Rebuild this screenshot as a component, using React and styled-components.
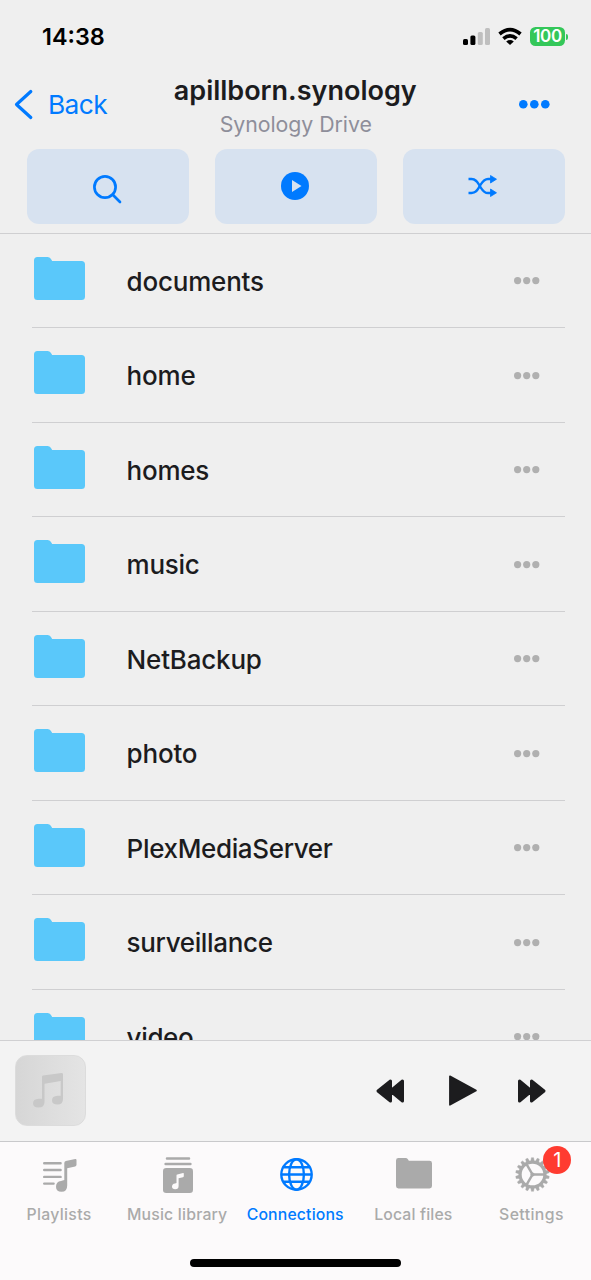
import React from "react";
import styled, { createGlobalStyle } from "styled-components";

const BLUE = "#007aff";
const INK = "#1c1c1e";
const GREY = "#aaaaaa";

const GlobalStyle = createGlobalStyle`
  * { box-sizing: border-box; }
  body { margin: 0; background: #efefef; font-family: Inter, "Liberation Sans", sans-serif; }
  svg { display: block; flex: none; overflow: visible; }
  button { border: 0; padding: 0; margin: 0; background: none; font: inherit; color: inherit; }
`;

const Screen = styled.div`
  width: 591px;
  height: 1280px;
  display: flex;
  flex-direction: column;
  overflow: hidden;
  background: #efefef;
  color: ${INK};
`;

const StatusBar = styled.div`
  height: 72px;
  padding: 1px 23px 0 42px;
  display: flex;
  justify-content: space-between;
  align-items: center;
  color: #000;
`;

const Clock = styled.span`
  font-size: 23.4px;
  line-height: 28px;
  font-weight: 600;
`;

const StatusIcons = styled.div`
  display: flex;
  align-items: center;
  gap: 8px;
`;

const Battery = styled.div`
  display: flex;
  align-items: center;
  gap: 1px;
`;

const BatteryBody = styled.span`
  width: 35px;
  height: 19px;
  border-radius: 5.5px;
  background: #34c759;
  color: #fff;
  font-size: 17px;
  line-height: 19px;
  font-weight: 600;
  letter-spacing: -0.3px;
  text-align: center;
`;

const BatteryTip = styled.span`
  width: 2px;
  height: 6px;
  border-radius: 0 2px 2px 0;
  background: #34c759;
`;

const Header = styled.header`
  height: 76px;
  padding: 0 40.5px 0 14px;
  display: grid;
  grid-template-columns: 110px 1fr 32px;
  align-items: start;
`;

const BackButton = styled.button`
  padding-top: 16px;
  display: flex;
  align-items: center;
  gap: 15px;
  color: ${BLUE};
  font-size: 26.3px;
  line-height: 32px;
  letter-spacing: -0.6px;
  white-space: nowrap;
`;

const BackLabel = styled.span`
  padding-top: 1px;
`;

const Titles = styled.div`
  padding: 2px 52px 0 0;
  display: flex;
  flex-direction: column;
  align-items: center;
`;

const Title = styled.h1`
  margin: 0;
  font-size: 27px;
  line-height: 34px;
  font-weight: 600;
  letter-spacing: 0;
`;

const Subtitle = styled.div`
  font-size: 21.3px;
  line-height: 26px;
  margin: 3px 0 0 1px;
  letter-spacing: -0.05px;
  color: #8e8e9a;
`;

const MoreButton = styled.button`
  padding-top: 28px;
`;

const Actions = styled.div`
  height: 86px;
  padding: 0.5px 26px 9.5px 26.5px;
  display: grid;
  grid-template-columns: repeat(3, 1fr);
  gap: 26px;
  border-bottom: 1px solid #cfcfd1;
`;

const ActionButton = styled.button`
  border-radius: 12px;
  padding: ${(p) => p.$inset || "0"};
  background: #d7e2f0;
  display: flex;
  align-items: center;
  justify-content: center;
`;

const List = styled.ul`
  flex: 1;
  min-height: 0;
  margin: -0.5px 0 0;
  padding: 0;
  list-style: none;
  overflow: hidden;
`;

const Row = styled.li`
  height: 94.5px;
  margin: 0 26px 0 31.5px;
  padding: 0 26px 0 2.3px;
  display: flex;
  align-items: flex-start;
  border-bottom: 1px solid #cfcfd1;
`;

const FolderSlot = styled.span`
  width: 92.8px;
  padding-top: 23px;
`;

const Name = styled.span`
  flex: 1;
  padding-top: 32.1px;
  font-size: 26px;
  line-height: 32px;
  font-weight: 450;
  letter-spacing: ${(p) => p.$ls || "-0.2px"};
`;

const RowMenu = styled.button`
  padding-top: 43.5px;
`;

const Player = styled.section`
  height: 101px;
  padding: 0 45px 1px 15px;
  display: flex;
  align-items: center;
  border-top: 1px solid #d0d0d2;
  background: #f3f3f3;
`;

const Cover = styled.div`
  width: 71px;
  height: 71px;
  padding-right: 4px;
  border-radius: 12px;
  border: 1px solid #dcdcdc;
  background: linear-gradient(90deg, #d6d6d6, #e4e4e4);
  display: flex;
  align-items: center;
  justify-content: center;
`;

const Transport = styled.div`
  margin-left: auto;
  display: flex;
  align-items: center;
`;

const PlayButton = styled.button`
  padding: 0 41px 0 45px;
`;

const TabBar = styled.nav`
  height: 139px;
  border-top: 1px solid #c9c9cb;
  background: #fcfafb;
  display: flex;
  flex-direction: column;
  align-items: center;
`;

const Tabs = styled.div`
  width: 591px;
  height: 117px;
  display: grid;
  grid-template-columns: repeat(5, 118.1px);
`;

const Tab = styled.button`
  display: flex;
  flex-direction: column;
  align-items: center;
  color: ${(p) => (p.$active ? BLUE : GREY)};
`;

const TabIcon = styled.span`
  position: relative;
  height: 61.5px;
  margin-left: 2px;
  padding-top: ${(p) => p.$top}px;
`;

const TabLabel = styled.span`
  font-size: 15.8px;
  line-height: 21px;
  font-weight: ${(p) => (p.$active ? 500 : 450)};
  letter-spacing: ${(p) => p.$ls || "0.4px"};
  white-space: nowrap;
`;

const Badge = styled.span`
  position: absolute;
  top: 4px;
  left: 28.5px;
  width: 28px;
  height: 28px;
  border-radius: 50%;
  background: #ff3b30;
  color: #fff;
  font-size: 20px;
  line-height: 28px;
  text-align: center;
`;

const HomeIndicator = styled.div`
  width: 211px;
  height: 8px;
  border-radius: 4px;
  background: #000;
`;

const Dots = ({ r, step, color }) => (
  <svg width={2 * (r + step)} height={2 * r} fill={color}>
    <circle cx={r} cy={r} r={r} />
    <circle cx={r + step} cy={r} r={r} />
    <circle cx={r + 2 * step} cy={r} r={r} />
  </svg>
);

const Folder = ({ width, height, color }) => (
  <svg width={width} height={height} viewBox="0 0 51 43" preserveAspectRatio="none" fill={color}>
    <path d="M3.5 0H13.5Q15.7 0 16.8 1.8L18.2 4H47.5Q51 4 51 7.5V39.5Q51 43 47.5 43H3.5Q0 43 0 39.5V3.5Q0 0 3.5 0Z" />
  </svg>
);

const Signal = () => (
  <svg width="27" height="17">
    <rect x="0" y="11" width="5" height="6" rx="1.5" />
    <rect x="7.4" y="7.6" width="5" height="9.4" rx="1.5" />
    <rect x="14.8" y="4" width="5" height="13" rx="1.5" fill="#bfbfbf" />
    <rect x="22" y="0" width="5" height="17" rx="1.5" fill="#bfbfbf" />
  </svg>
);

const Wifi = () => (
  <svg width="24" height="17" fill="none" stroke="#000" strokeWidth="3.7">
    <path d="M1.5 6Q12 -2.6 22.5 6" />
    <path d="M5.4 10.7Q12 5.2 18.6 10.7" />
    <path d="M12 17L8.2 13.4Q12 10.6 15.8 13.4Z" fill="#000" stroke="none" />
  </svg>
);

const SearchIcon = () => (
  <svg width="29" height="29" fill="none" stroke={BLUE} strokeWidth="2.7" strokeLinecap="round">
    <circle cx="12" cy="12" r="10.6" />
    <path d="M19.8 19.8L27 27" />
  </svg>
);

const PlayCircle = () => (
  <svg width="28" height="28">
    <circle cx="14" cy="14" r="14" fill={BLUE} />
    <path d="M11 8L20.5 14L11 20Z" fill="#d7e2f0" />
  </svg>
);

const Shuffle = () => (
  <svg width="29" height="22" fill="none" stroke={BLUE} strokeWidth="2.3">
    <path d="M0.5 4H3.5C8.5 4 9.5 7.5 11.8 11S15.5 18 20 18H23" />
    <path d="M0.5 18H3.5C8.5 18 9.5 14.5 11.8 11S15.5 4 20 4H23" />
    <path d="M22.5 .5L28.5 4.2L22.5 8ZM22.5 14L28.5 17.8L22.5 21.5Z" fill={BLUE} stroke={BLUE} strokeWidth=".8" strokeLinejoin="round" />
  </svg>
);

const Note = () => (
  <svg width="31" height="35" fill="#c8c8c8">
    <path d="M9 3.7Q9 2.7 10 2.5L28.5 0Q30 0 30 1.2V26Q30 31.5 24.5 31.5Q19 31.5 19 27.2Q19 23 24.5 22.7H27.7V8L11.5 10.7V29Q11.5 34.5 5.5 34.5Q0 34.5 0 30.3Q0 26 5.5 25.7H9Z" />
  </svg>
);

const FastForward = ({ back }) => (
  <svg width="28" height="24" fill={INK} stroke={INK} strokeWidth="3" strokeLinejoin="round" transform={back ? "scale(-1 1)" : undefined}>
    <path d="M1.5 2L13.5 12L1.5 22ZM13.5 2L26 12L13.5 22Z" />
  </svg>
);

const Play = () => (
  <svg width="28" height="31" fill={INK} stroke={INK} strokeWidth="1.6" strokeLinejoin="round">
    <path d="M.9 1.2L27 15.5L.9 29.8Z" />
  </svg>
);

const PlaylistIcon = () => (
  <svg width="34" height="33" fill={GREY}>
    <path d="M1.2 4.3H17.6M1.2 11H17.6M1.2 17.9H17.6M1.2 24.6H10.6" stroke={GREY} strokeWidth="2.4" strokeLinecap="round" />
    <path d="M21.3 4Q21.3 2.5 22.8 2.1L32.2 0Q33.5 -.2 33.5 1.1V5.8Q33.5 7.1 32.2 7.4L24.2 9.2V26.5Q24.2 32.8 18.5 32.8Q13 32.8 13 27.7Q13 22.5 18 21.9L21.3 21Z" />
  </svg>
);

const LibraryIcon = () => (
  <svg width="30" height="36" fill={GREY}>
    <path d="M4 1.5H26M2.6 7.1H27.4" stroke={GREY} strokeWidth="2.5" strokeLinecap="round" />
    <rect y="11" width="30" height="25" rx="3.2" />
    <path d="M13.5 18.4Q13.5 17.6 14.3 17.4L20 16Q20.8 15.8 20.8 16.6V19.3Q20.8 20 20 20.2L15.6 21.2V29Q15.6 32.2 12.2 32.2Q9 32.2 9 29.5Q9 26.8 12 26.4L13.5 26Z" fill="#fcfafb" />
  </svg>
);

const Globe = () => (
  <svg width="33" height="33" fill="none" stroke={BLUE} strokeWidth="2.4">
    <circle cx="16.5" cy="16.5" r="15.2" />
    <ellipse cx="16.5" cy="16.5" rx="7.4" ry="15.2" />
    <path d="M1.3 16.5H31.7M3.6 9.2H29.4M3.6 23.8H29.4" />
  </svg>
);

const Gear = () => (
  <svg width="35" height="35" viewBox="-17.5 -17.5 35 35" stroke={GREY} fill="none">
    {Array.from({ length: 18 }, (_, i) => (
      <path key={i} d="M-1.8 -13L-1.1 -16.8H1.1L1.8 -13Z" fill={GREY} strokeWidth=".4" transform={`rotate(${i * 20})`} />
    ))}
    <circle r="12.4" strokeWidth="3.2" />
    <path d="M0 0H12M0 0L-6 -10.4M0 0L-6 10.4" strokeWidth="2.5" />
    <circle r="2.1" fill={GREY} stroke="none" />
  </svg>
);

const folders = [
  { name: "documents" },
  { name: "home" },
  { name: "homes", ls: "-0.25px" },
  { name: "music", ls: "-0.3px" },
  { name: "NetBackup" },
  { name: "photo" },
  { name: "PlexMediaServer", ls: "-0.35px" },
  { name: "surveillance", ls: "-0.35px" },
  { name: "video", ls: "-0.35px" },
];

const tabs = [
  { label: "Playlists", top: 17, icon: <PlaylistIcon />, ls: "0.3px" },
  { label: "Music library", top: 14.5, icon: <LibraryIcon />, ls: "0.2px" },
  { label: "Connections", top: 16, icon: <Globe />, active: true, ls: "0.15px" },
  { label: "Local files", top: 16, icon: <Folder width={36} height={30.5} color={GREY} />, ls: "0.15px" },
  { label: "Settings", top: 14.5, icon: <Gear />, badge: 1 },
];

export default function App() {
  return (
    <Screen>
      <GlobalStyle />
      <StatusBar>
        <Clock>14:38</Clock>
        <StatusIcons>
          <Signal />
          <Wifi />
          <Battery>
            <BatteryBody>100</BatteryBody>
            <BatteryTip />
          </Battery>
        </StatusIcons>
      </StatusBar>
      <Header>
        <BackButton>
          <svg width="19" height="30" fill="none" stroke={BLUE} strokeWidth="3.2" strokeLinecap="round" strokeLinejoin="round">
            <path d="M16.8 1.5L2.5 14.5L16.8 27.5" />
          </svg>
          <BackLabel>Back</BackLabel>
        </BackButton>
        <Titles>
          <Title>apillborn.synology</Title>
          <Subtitle>Synology Drive</Subtitle>
        </Titles>
        <MoreButton aria-label="More">
          <Dots r={4.3} step={11} color={BLUE} />
        </MoreButton>
      </Header>
      <Actions>
        <ActionButton aria-label="Search" $inset="7px 0 0"><SearchIcon /></ActionButton>
        <ActionButton aria-label="Play" $inset="0 1px 0 0"><PlayCircle /></ActionButton>
        <ActionButton aria-label="Shuffle" $inset="0 2px 0 0"><Shuffle /></ActionButton>
      </Actions>
      <List>
        {folders.map((f) => (
          <Row key={f.name}>
            <FolderSlot><Folder width={51} height={43} color="#5ac8fa" /></FolderSlot>
            <Name $ls={f.ls}>{f.name}</Name>
            <RowMenu aria-label="More"><Dots r={3.6} step={9.1} color="#b0b0b0" /></RowMenu>
          </Row>
        ))}
      </List>
      <Player>
        <Cover><Note /></Cover>
        <Transport>
          <FastForward back />
          <PlayButton aria-label="Play"><Play /></PlayButton>
          <FastForward />
        </Transport>
      </Player>
      <TabBar>
        <Tabs>
          {tabs.map((t) => (
            <Tab key={t.label} $active={t.active}>
              <TabIcon $top={t.top}>
                {t.icon}
                {t.badge && <Badge>{t.badge}</Badge>}
              </TabIcon>
              <TabLabel $active={t.active} $ls={t.ls}>{t.label}</TabLabel>
            </Tab>
          ))}
        </Tabs>
        <HomeIndicator />
      </TabBar>
    </Screen>
  );
}
